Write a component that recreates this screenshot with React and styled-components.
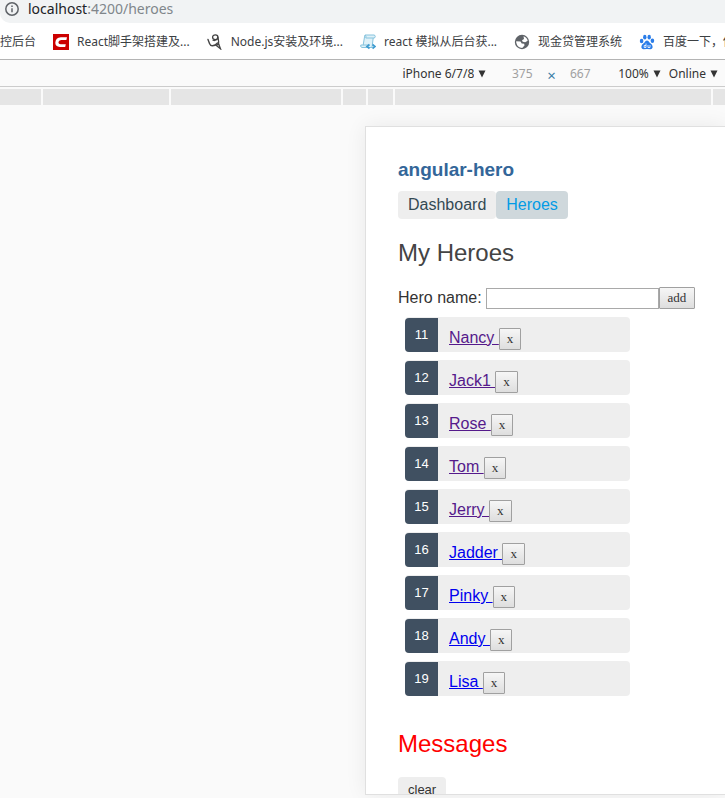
import React from "react";
import styled, { createGlobalStyle } from "styled-components";

const UI = `"Noto Sans", "Noto Sans CJK SC", sans-serif`;
const ARIAL = `"Liberation Sans", Arial, sans-serif`;

const GlobalStyle = createGlobalStyle`
  * { box-sizing: border-box; }
  body { margin: 0; background: #fff; font-family: ${UI}; }
  button, input, select { margin: 0; }
`;

const Window = styled.div`
  display: flex;
  flex-direction: column;
  height: 100vh;
  overflow: hidden;
  background: #fafafa;
`;

const AddressArea = styled.header`
  background: #fff;
`;
const AddressBar = styled.div`
  display: flex;
  align-items: center;
  gap: 9px;
  height: 23px;
  padding: 0 0 5px 5px;
  background: #f1f3f4;
  border-bottom-left-radius: 10px;
  font-size: 14px;
  line-height: 18px;
  color: #80868b;
`;
const Host = styled.span`
  color: #202124;
`;

const Bookmarks = styled.nav`
  display: flex;
  flex: none;
  align-items: center;
  gap: 17px;
  height: 37px;
  padding-top: 1px;
  overflow: hidden;
  background: #fff;
  border-bottom: 1px solid #b4b4b4;
`;
const Bookmark = styled.a`
  display: flex;
  flex: none;
  align-items: center;
  gap: 8px;
  font-size: 12px;
  line-height: 18px;
  color: #3c4043;
  text-decoration: none;
  white-space: nowrap;
`;

const DeviceToolbar = styled.div`
  display: flex;
  flex: none;
  align-items: center;
  justify-content: flex-end;
  height: 27px;
  padding: 1px 7px 0 0;
  border-bottom: 1px solid #ccc;
  font-size: 12px;
  color: #333;
`;
const Picker = styled.label`
  display: flex;
  align-items: center;
  gap: 4px;
  margin-left: ${(p) => p.$gap || 0}px;
`;
const PickerSelect = styled.select`
  appearance: none;
  field-sizing: content;
  padding: 0;
  border: 0;
  background: none;
  color: inherit;
  font: 12px/18px ${UI};
`;
const SizeInput = styled.input`
  width: 36px;
  padding: 0;
  border: 0;
  background: none;
  text-align: center;
  color: #a0a0a0;
  font: 12px/18px ${UI};
`;
const SizeGroup = styled.div`
  display: flex;
  align-items: center;
  gap: 7px;
  margin-left: 18px;
`;
const Times = styled.span`
  width: 8px;
  padding-top: 2px;
  text-align: center;
  font-size: 15px;
  line-height: 18px;
  color: #3b7ea6;
`;

const MediaBar = styled.div`
  display: flex;
  flex: none;
  gap: 2px;
  height: 18px;
  padding-top: 2px;
`;
const MediaSegment = styled.div`
  flex: ${(p) => (p.$width ? `0 0 ${p.$width}px` : "1 1 0")};
  background: #e5e5e5;
`;

const Stage = styled.main`
  display: flex;
  flex: 1;
  min-height: 0;
  padding: 21px 0 3px 365px;
`;
const Device = styled.div`
  flex: 1;
  overflow: hidden;
  padding: 32px 0 0 32px;
  border: 1px solid #e0e0e0;
  border-right: 0;
  background: #fff;
  box-shadow: 0 0 20px rgba(0, 0, 0, 0.07);
  font: 16px/22px ${ARIAL};
  color: #333;
`;

const AppTitle = styled.h1`
  margin: 0 0 10px;
  font-size: 19px;
  line-height: 22px;
  color: #369;
`;
const Tabs = styled.nav`
  display: flex;
`;
const Tab = styled.a`
  padding: 0 10px;
  border-radius: 4px;
  line-height: 28px;
  text-decoration: none;
  background: ${(p) => (p.$active ? "#cfd8dc" : "#eee")};
  color: ${(p) => (p.$active ? "#039be5" : "#334953")};
`;
const Heading = styled.h2`
  margin: ${(p) => p.$top}px 0 0;
  font-size: 24px;
  line-height: 28px;
  font-weight: 400;
  color: ${(p) => p.$color};
`;
const AddForm = styled.form`
  display: flex;
  align-items: center;
  margin-top: 20px;
`;
const NameInput = styled.input`
  width: 173px;
  height: 21px;
  margin-left: 4px;
  padding: 1px 4px;
  border: 1px solid #a9a9a9;
  font: 13px ${ARIAL};
`;
const GreyButton = styled.button`
  height: 22px;
  padding: 0 ${(p) => (p.$wide ? 8 : 7)}px;
  border: 1px solid #a0a0a0;
  border-radius: 1px;
  background: linear-gradient(#f6f6f6, #dedede);
  color: #333;
  font: 13px/20px "Liberation Serif", serif;
`;

const HeroList = styled.ul`
  display: flex;
  flex-direction: column;
  gap: 8px;
  width: 225px;
  margin: 8px 0 0 7px;
  padding: 0;
  list-style: none;
`;
const HeroRow = styled.li`
  display: flex;
  height: 35px;
  border-radius: 4px;
  background: #eee;
`;
const Badge = styled.span`
  width: 33px;
  margin-top: 1px;
  border-radius: 4px 0 0 4px;
  background: #405061;
  color: #fff;
  font-size: 13px;
  line-height: 34px;
  text-align: center;
`;
const HeroEntry = styled.div`
  display: flex;
  align-items: baseline;
  padding: 10px 0 0 11px;
`;
const HeroLink = styled.a`
  white-space: pre;
  color: ${(p) => (p.$visited ? "#551a8b" : "#0000ee")};
`;
const ClearButton = styled.button`
  margin-top: 19px;
  padding: 5px 10px;
  border: 0;
  border-radius: 4px;
  background: #eee;
  color: #333;
  font: 13px/16px ${ARIAL};
`;

const Arrow = () => (
  <svg width="8" height="8" viewBox="0 0 8 8" aria-hidden="true">
    <path d="M0.5 0.5h7L4 7.5z" fill="#333" />
  </svg>
);

const InfoIcon = () => (
  <svg width="14" height="14" viewBox="0 0 14 14" fill="none" stroke="#5f6368">
    <circle cx="7" cy="7" r="6.2" strokeWidth="1.5" />
    <path d="M7 6.2v4M7 3.6v1.4" strokeWidth="1.5" />
  </svg>
);
const CIcon = () => (
  <svg width="16" height="16" viewBox="0 0 16 16">
    <path d="M0 0h16v16H0z" fill="#c00" />
    <path d="M14 3.2L13.4 6H8.2Q5.6 6.200 5.400 8.300q0 1.900 2.200 1.900h5.200l-.6 2.700H6.800Q2.300 12.700 2.300 8.700 2.600 3.600 7.800 3.200z" fill="#fff" />
  </svg>
);
const ScribbleIcon = () => (
  <svg width="16" height="16" viewBox="0 0 16 16" fill="none" stroke="#444" strokeLinecap="round">
    <path d="M1 5.500l1.500 4q1 2.500 3 2.300Q8.500 11.500 10.500 9" strokeWidth="1.400" />
    <ellipse cx="8.300" cy="3.300" rx="2.700" ry="2.400" strokeWidth="1.300" />
    <path d="M6 6.300q3 1 5-2.300" strokeWidth="1.200" />
    <path d="M10.500 3Q12 6 11.500 9.500l2 5.300L9 11.200l3-1" strokeWidth="1.300" />
  </svg>
);
const ScrollIcon = () => (
  <svg width="16" height="16" viewBox="0 0 16 16">
    <path d="M5 1h9.500q1.500 1.500 0 3h-1.300L12 13.500H2Q0 13 .8 11h2.400L4.500 3z" fill="#dff1f8" stroke="#86c3dd" />
    <path d="M5 1q1.500 1.200.8 3h7.500M3 11h6" fill="none" stroke="#86c3dd" />
    <path d="M9.500 10.500l-2.500 2 2.500 2M12.500 10.500l2.500 2-2.500 2" fill="none" stroke="#3d9bd0" strokeWidth="1.700" />
  </svg>
);
const GlobeIcon = () => (
  <svg width="16" height="16" viewBox="0 0 16 16">
    <circle cx="8" cy="8" r="7.200" fill="#5f6368" />
    <path d="M9.500 2.300q3.500 1 4.200 4.500l-2.500 1.500-2.500-.6-.7-1.500 2-1.200z" fill="#fff" />
    <path d="M2.200 7.200l4.300.2 1.200 2 2.500.4.300 1.700-2.300 2.400q-5-.4-6-5.500z" fill="#fff" />
  </svg>
);
const PawIcon = () => (
  <svg width="16" height="16" viewBox="0 0 16 16" fill="#2a7de9">
    <ellipse cx="2.600" cy="7" rx="1.800" ry="2.200" />
    <ellipse cx="5.800" cy="3.200" rx="1.700" ry="2.400" />
    <ellipse cx="10.200" cy="3.200" rx="1.700" ry="2.400" />
    <ellipse cx="13.400" cy="6.800" rx="1.800" ry="2.200" />
    <path d="M8 6.600q1.500 0 2.500 1.800l2.500 2.400q1.800 3.800-1.500 4.500l-3.500-.2-3.500.2Q1.200 14.600 3 10.800l2.500-2.400Q6.500 6.600 8 6.600z" />
    <path d="M7 9.500v4H5.200v-2H7M9 11v2.500h2V11" fill="none" stroke="#fff" strokeWidth=".8" />
  </svg>
);

const bookmarks = [
  { title: "控后台" },
  { title: "React脚手架搭建及...", Icon: CIcon },
  { title: "Node.js安装及环境...", Icon: ScribbleIcon },
  { title: "react 模拟从后台获...", Icon: ScrollIcon },
  { title: "现金贷管理系统", Icon: GlobeIcon },
  { title: "百度一下，你", Icon: PawIcon },
];

const segments = [41, 126, 170, 23, 25, 316, 0];

const heroes = [
  { id: 11, name: "Nancy", visited: true },
  { id: 12, name: "Jack1", visited: true },
  { id: 13, name: "Rose", visited: true },
  { id: 14, name: "Tom", visited: true },
  { id: 15, name: "Jerry", visited: true },
  { id: 16, name: "Jadder" },
  { id: 17, name: "Pinky" },
  { id: 18, name: "Andy" },
  { id: 19, name: "Lisa" },
];

export default function App() {
  return (
    <Window>
      <GlobalStyle />
      <AddressArea>
        <AddressBar>
          <InfoIcon />
          <span><Host>localhost</Host>:4200/heroes</span>
        </AddressBar>
      </AddressArea>
      <Bookmarks>
        {bookmarks.map(({ title, Icon }) => (
          <Bookmark href="#" key={title}>
            {Icon && <Icon />}
            {title}
          </Bookmark>
        ))}
      </Bookmarks>
      <DeviceToolbar>
        <Picker>
          <PickerSelect aria-label="Device"><option>iPhone 6/7/8</option></PickerSelect>
          <Arrow />
        </Picker>
        <SizeGroup>
          <SizeInput aria-label="Width" defaultValue="375" />
          <Times>×</Times>
          <SizeInput aria-label="Height" defaultValue="667" />
        </SizeGroup>
        <Picker $gap={20}>
          <PickerSelect aria-label="Zoom"><option>100%</option></PickerSelect>
          <Arrow />
        </Picker>
        <Picker $gap={8}>
          <PickerSelect aria-label="Throttling"><option>Online</option></PickerSelect>
          <Arrow />
        </Picker>
      </DeviceToolbar>
      <MediaBar>
        {segments.map((width, i) => <MediaSegment key={i} $width={width} />)}
      </MediaBar>
      <Stage>
        <Device>
          <AppTitle>angular-hero</AppTitle>
          <Tabs>
            <Tab href="#dashboard">Dashboard</Tab>
            <Tab href="#heroes" $active>Heroes</Tab>
          </Tabs>
          <Heading $top={20} $color="#444">My Heroes</Heading>
          <AddForm onSubmit={(e) => e.preventDefault()}>
            <label htmlFor="hero-name">Hero name:</label>
            <NameInput id="hero-name" />
            <GreyButton $wide>add</GreyButton>
          </AddForm>
          <HeroList>
            {heroes.map((hero) => (
              <HeroRow key={hero.id}>
                <Badge>{hero.id}</Badge>
                <HeroEntry>
                  <HeroLink href={`#detail/${hero.id}`} $visited={hero.visited}>{`${hero.name} `}</HeroLink>
                  <GreyButton type="button" aria-label={`Delete ${hero.name}`}>x</GreyButton>
                </HeroEntry>
              </HeroRow>
            ))}
          </HeroList>
          <Heading $top={34} $color="#f00">Messages</Heading>
          <ClearButton type="button">clear</ClearButton>
        </Device>
      </Stage>
    </Window>
  );
}
